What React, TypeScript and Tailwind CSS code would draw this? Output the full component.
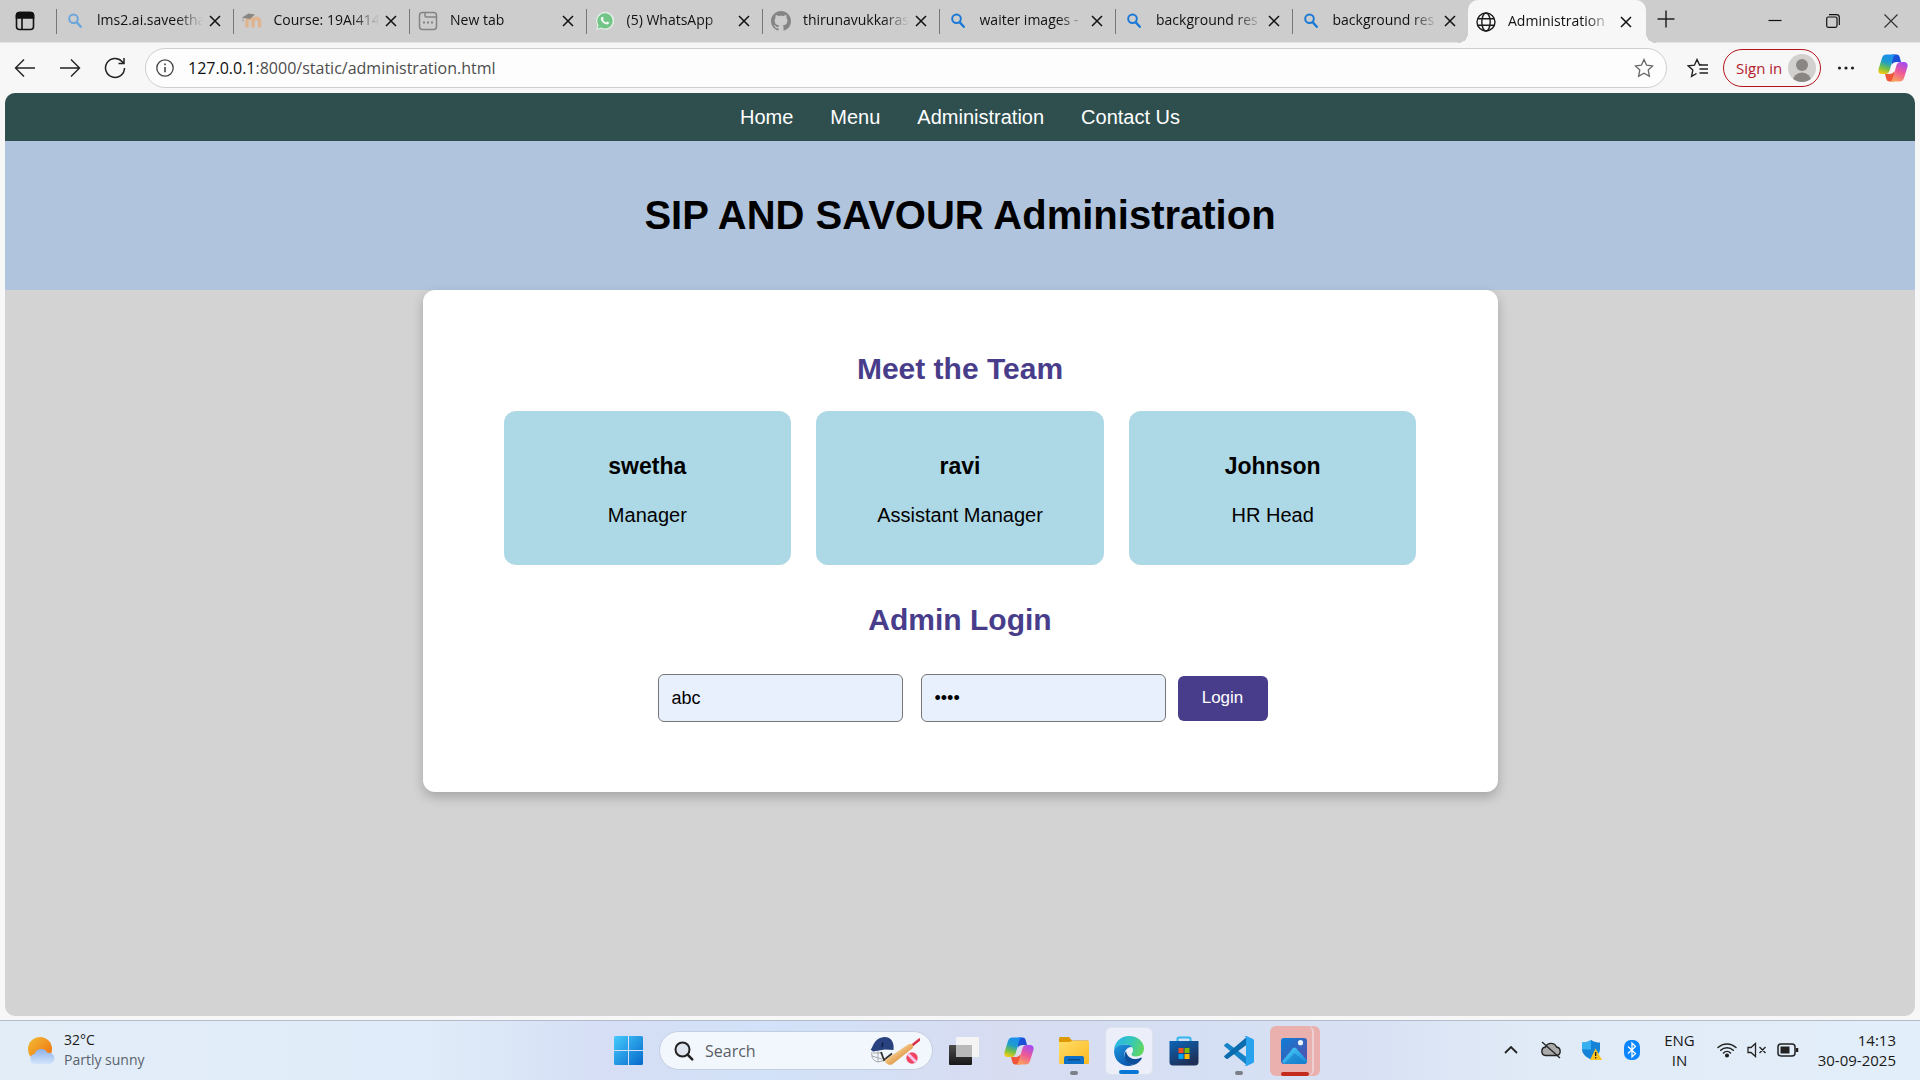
import React from "react";

const ui = "font-['Open_Sans','Noto_Sans',sans-serif]";

function SearchIcon({ color = "#1b7ad6", className = "" }: { color?: string; className?: string }) {
  return (
    <svg viewBox="0 0 18 18" className={"size-[18px] " + className} fill="none" stroke={color} strokeLinecap="round">
      <circle cx="7.5" cy="6.8" r="4.3" strokeWidth="2" />
      <path d="M10.8 10.4l4 4.4" strokeWidth="2.4" />
    </svg>
  );
}

function CloseIcon() {
  return (
    <svg viewBox="0 0 12 12" className="size-3" stroke="#111" strokeWidth="1.5" fill="none">
      <path d="M1 1l10 10M11 1L1 11" />
    </svg>
  );
}

function MoodleIcon() {
  return (
    <svg viewBox="0 0 20 18" className="h-[18px] w-5" fill="none">
      <path d="M5 15.500V9.500a2.600 2.600 0 0 1 6 0v6M11 9.500a2.600 2.600 0 0 1 6.500 0v6" stroke="#e0b48e" strokeWidth="3.400" />
      <path d="M0 5.500L6.500 1.500 13 2.500 8 7l-5-.8z" fill="#8a8681" />
      <path d="M1 5.500v4" stroke="#aaa39c" />
    </svg>
  );
}

function NewTabIcon() {
  return (
    <svg viewBox="0 0 20 20" className="size-5" fill="none" stroke="#848484" strokeWidth="1.5">
      <rect x="1.5" y="1.5" width="17" height="17" rx="3" />
      <path d="M7 1.5v3.2c0 .8.5 1.3 1.3 1.3h10.2" />
      <path d="M5 11.5h2M9 11.5h2M13 11.5h2" strokeWidth="2" />
    </svg>
  );
}

function WhatsAppIcon() {
  return (
    <svg viewBox="0 0 20 20" className="size-5">
      <path d="M1 19l1.400-4.600A9 9 0 1 1 6 17.800z" fill="#e4efe6" />
      <path d="M2.600 17.500l1-3.400A7.600 7.600 0 1 1 6.300 16.600z" fill="#72c487" />
      <path d="M7.200 5.800c.7-.3 1.100.5 1.500 1.700-.2.600-.8.800-.6 1.200.8 1.400 1.700 2 2.900 2.600.5 0 .7-.9 1.200-.9.700.2 1.900.8 1.900 1.100-.1 1.600-1.700 2-2.500 1.900-2.900-.5-5.400-2.900-5.800-5.200-.1-1 .6-2.100 1.400-2.400z" fill="#f1f7f2" />
    </svg>
  );
}

function GithubIcon() {
  return (
    <svg viewBox="0 0 16 16" className="size-5" fill="#858585">
      <path d="M8 0C3.580 0 0 3.580 0 8c0 3.540 2.290 6.530 5.470 7.590.4.070.55-.17.55-.38 0-.19-.010-.82-.010-1.490-2.010.37-2.530-.49-2.690-.94-.09-.23-.48-.94-.82-1.130-.28-.15-.68-.52-.010-.53.63-.010 1.080.58 1.230.82.72 1.210 1.870.87 2.330.66.070-.52.28-.87.51-1.070-1.780-.2-3.640-.89-3.640-3.950 0-.87.31-1.590.82-2.150-.08-.2-.36-1.020.08-2.120 0 0 .67-.21 2.200.82.64-.18 1.320-.27 2-.27s1.360.09 2 .27c1.530-1.040 2.200-.82 2.200-.82.44 1.100.16 1.920.08 2.120.51.56.82 1.270.82 2.150 0 3.070-1.870 3.750-3.650 3.950.29.25.54.73.54 1.480 0 1.070-.010 1.930-.010 2.200 0 .21.15.46.55.38A8.010 8.010 0 0 0 16 8c0-4.420-3.580-8-8-8z" />
    </svg>
  );
}

function GlobeIcon() {
  return (
    <svg viewBox="0 0 20 20" className="size-5" fill="none" stroke="#1b1b1b" strokeWidth="1.400">
      <circle cx="10" cy="10" r="9" />
      <ellipse cx="10" cy="10" rx="4.200" ry="9" />
      <path d="M1.800 6.800h16.400M1.800 13.200h16.400" />
    </svg>
  );
}

function CopilotIcon({ id }: { id: string }) {
  return (
    <svg viewBox="0 0 30 28" className="h-7 w-[30px]">
      <defs>
        <linearGradient id={id + "a"} x1="0.6" y1="0" x2="0.3" y2="1">
          <stop offset="0" stopColor="#1b8df0" />
          <stop offset="0.4" stopColor="#1f9ccb" />
          <stop offset="0.7" stopColor="#6fc04a" />
          <stop offset="1" stopColor="#f2c913" />
        </linearGradient>
        <linearGradient id={id + "b"} x1="0.7" y1="0" x2="0.3" y2="1">
          <stop offset="0" stopColor="#a74bf0" />
          <stop offset="0.5" stopColor="#ee5a96" />
          <stop offset="1" stopColor="#fba25c" />
        </linearGradient>
      </defs>
      <path d="M14 0.500h4.500c2 0 2.800 1.200 3.300 3L23 8h-4c-3 0-4.500 1-5.300 3z" fill="#1b4fd6" />
      <path d="M16 27.500h-4.500c-2 0-2.800-1.200-3.300-3L7 20h4c3 0 4.500-1 5.300-3z" fill="#f0563a" />
      <path d="M8.500 0.500H18c-1.500.5-2.200 1.600-2.700 3.200L11.600 16.500c-.8 2.500-2 3.500-4.600 3.500H4c-3 0-4.200-2-3.400-5L4 4c.8-2.400 2.200-3.500 4.500-3.500z" fill={"url(#" + id + "a)"} />
      <path d="M21.500 27.500H12c1.500-.5 2.200-1.600 2.700-3.200l3.700-12.800c.8-2.500 2-3.500 4.600-3.500h3c3 0 4.200 2 3.400 5L26 24c-.8 2.400-2.200 3.500-4.500 3.500z" fill={"url(#" + id + "b)"} />
    </svg>
  );
}

const tabs: { title: string; icon: React.ReactNode }[] = [
  { title: "lms2.ai.saveetha", icon: <SearchIcon color="#6aa5dc" /> },
  { title: "Course: 19AI414", icon: <MoodleIcon /> },
  { title: "New tab", icon: <NewTabIcon /> },
  { title: "(5) WhatsApp", icon: <WhatsAppIcon /> },
  { title: "thirunavukkaras", icon: <GithubIcon /> },
  { title: "waiter images -", icon: <SearchIcon /> },
  { title: "background res", icon: <SearchIcon /> },
  { title: "background res", icon: <SearchIcon /> },
];

function TabBar() {
  return (
    <div className="flex h-[43px] border-b border-[#e4e4e4] bg-[#cdcdcd] text-sm text-[#111]">
      <button aria-label="Tab actions" className="flex w-14 shrink-0 items-center justify-center pr-1.5">
        <svg viewBox="0 0 20 20" className="size-5" fill="none" stroke="#111" strokeWidth="1.600">
          <rect x="1.500" y="1.500" width="17" height="17" rx="3" />
          <path d="M7 7v11" />
          <path d="M1.500 4.500a3 3 0 0 1 3-3h11a3 3 0 0 1 3 3V7h-17z" fill="#111" />
        </svg>
      </button>
      <div className="flex min-w-0 shrink grow-0 basis-[1412px]">
        {tabs.map((t, i) => (
          <div key={i} className="flex min-w-0 flex-1 items-center">
            <span className="h-[25px] w-px shrink-0 bg-[#777]" />
            <span className="ml-2 flex w-5 shrink-0 justify-center">{t.icon}</span>
            <span className="ml-3 flex-1 overflow-hidden pb-0.5 whitespace-nowrap [mask-image:linear-gradient(to_right,black_75%,transparent)]">{t.title}</span>
            <button aria-label={"Close " + t.title} className="mr-3 ml-1.5 shrink-0"><CloseIcon /></button>
          </div>
        ))}
      </div>
      <div className="relative flex h-[43px] w-[178px] shrink-0 items-center rounded-t-[10px] bg-[#f7f7f7] before:absolute before:bottom-0 before:-left-2.5 before:size-2.5 before:bg-[radial-gradient(circle_at_0_0,#cdcdcd_10px,#f7f7f7_10px)] after:absolute after:-right-2.5 after:bottom-0 after:size-2.5 after:bg-[radial-gradient(circle_at_100%_0,#cdcdcd_10px,#f7f7f7_10px)]">
        <span className="ml-2 shrink-0"><GlobeIcon /></span>
        <span className="ml-3 flex-1 overflow-hidden pb-0.5 whitespace-nowrap [mask-image:linear-gradient(to_right,black_75%,transparent)]">Administration</span>
        <button aria-label="Close tab" className="mr-3.5 ml-2 shrink-0"><CloseIcon /></button>
      </div>
      <button aria-label="New tab" className="flex w-10 shrink-0 items-center justify-center pb-1">
        <svg viewBox="0 0 18 18" className="size-[18px]" stroke="#222" strokeWidth="1.500"><path d="M9 0.500v17M0.500 9h17" /></svg>
      </button>
      <div className="ml-auto flex shrink-0">
        <button aria-label="Minimize" className="flex w-[58px] items-center justify-center">
          <svg viewBox="0 0 14 14" className="size-3.5" stroke="#111" strokeWidth="1.200"><path d="M0.500 6.500h13" /></svg>
        </button>
        <button aria-label="Restore" className="flex w-[58px] items-center justify-center">
          <svg viewBox="0 0 14 14" className="size-3.5" stroke="#111" strokeWidth="1.200" fill="none"><rect x="0.700" y="3" width="10.300" height="10.300" rx="1.500" /><path d="M3 .7h7.500a2.800 2.800 0 0 1 2.800 2.800V11" /></svg>
        </button>
        <button aria-label="Close window" className="flex w-[58px] items-center justify-center">
          <svg viewBox="0 0 14 14" className="size-3.5" stroke="#333" strokeWidth="1.200"><path d="M.5.500l13 13M13.500.500l-13 13" /></svg>
        </button>
      </div>
    </div>
  );
}

const starPath = "M10 1.500l2.600 5.700 6.100.7-4.500 4.200 1.200 6.200L10 15.200l-5.400 3.100 1.200-6.200L1.300 7.900l6.100-.7z";

function Toolbar() {
  return (
    <div className="flex h-[50px] items-center bg-[#f7f7f7]">
      <button aria-label="Back" className="flex w-[45px] justify-center pl-1">
        <svg viewBox="0 0 22 20" className="h-5 w-[22px]" fill="none" stroke="#222" strokeWidth="1.400"><path d="M21 10H1.500M10 1.500L1.500 10l8.500 8.500" /></svg>
      </button>
      <button aria-label="Forward" className="flex w-[45px] justify-center pl-1">
        <svg viewBox="0 0 22 20" className="h-5 w-[22px]" fill="none" stroke="#222" strokeWidth="1.400"><path d="M1 10h19.500M12 1.500l8.500 8.500-8.500 8.500" /></svg>
      </button>
      <button aria-label="Refresh" className="flex w-[45px] justify-center pl-1">
        <svg viewBox="0 0 22 22" className="size-[22px]" fill="none" stroke="#222" strokeWidth="1.500"><path d="M20.500 11A9.500 9.500 0 1 1 18 4.500l1.500 1.700M20 1v5.500h-5.500" /></svg>
      </button>
      <div className="ml-2.5 flex h-10 flex-1 items-center rounded-full border border-[#cfcfcf] bg-[#fdfdfd]">
        <svg viewBox="0 0 18 18" className="ml-2.5 size-[18px] shrink-0" fill="none" stroke="#444" strokeWidth="1.300"><circle cx="9" cy="9" r="8.200" /><path d="M9 8v5.200M9 4.500v1.800" strokeWidth="1.600" /></svg>
        <span className="ml-3.5 flex-1 text-base text-[#4d4d4d]"><span className="text-[#111]">127.0.0.1</span>:8000/static/administration.html</span>
        <button aria-label="Favorite this page" className="mr-3"><svg viewBox="0 0 20 20" className="size-5" fill="none" stroke="#666" strokeWidth="1.300"><path d={starPath} /></svg></button>
      </div>
      <button aria-label="Favorites" className="ml-5">
        <svg viewBox="0 0 22 20" className="h-5 w-[22px]" fill="none" stroke="#222" strokeWidth="1.400"><path d="M14.500 6.500L12.600 7.100 10 1.500 7.400 7.200l-6.100.7 4.500 4.200-1.200 6.200L9.500 15.500M13 7h8M12.500 11h8.500M12.500 15h8.500" /></svg>
      </button>
      <button className="ml-3.5 flex h-[38px] w-[98px] items-center rounded-full border border-[#b3141c] pl-3 text-[15px] text-[#b3202a]">
        <span className="flex-1 text-left whitespace-nowrap">Sign in</span>
        <svg viewBox="0 0 28 28" className="mr-1 size-7 shrink-0"><defs><clipPath id="av"><circle cx="14" cy="14" r="14" /></clipPath></defs><g clipPath="url(#av)"><rect width="28" height="28" fill="#d2d0ce" /><circle cx="14" cy="11" r="6" fill="#8a8683" /><path d="M4.500 28a9.500 9.500 0 0 1 19 0z" fill="#8a8683" /></g></svg>
      </button>
      <button aria-label="Settings and more" className="ml-4"><svg viewBox="0 0 18 6" className="h-1.5 w-[18px]" fill="#222"><circle cx="2.500" cy="3" r="1.600" /><circle cx="9" cy="3" r="1.600" /><circle cx="15.500" cy="3" r="1.600" /></svg></button>
      <button aria-label="Copilot" className="mr-3 ml-[23px]"><CopilotIcon id="top" /></button>
    </div>
  );
}

const team = [
  { name: "swetha", role: "Manager" },
  { name: "ravi", role: "Assistant Manager" },
  { name: "Johnson", role: "HR Head" },
];

function Page() {
  return (
    <div className="mx-[5px] mb-1 flex-1 overflow-hidden rounded-[10px] bg-[#d3d3d3] font-['Liberation_Sans',Arial,sans-serif] text-xl text-black">
      <nav className="flex h-12 items-center justify-center gap-[37px] bg-[#2f4f4f] text-white">
        <a href="#home">Home</a>
        <a href="#menu">Menu</a>
        <a href="#administration">Administration</a>
        <a href="#contact">Contact Us</a>
      </nav>
      <header className="bg-[#b0c4de] py-[50px] text-center">
        <h1 className="text-[40px] leading-[49px] font-bold">SIP AND SAVOUR Administration</h1>
      </header>
      <main className="mx-auto w-[1075px] max-w-full rounded-[12px] bg-white px-[81px] pt-[61px] pb-[70px] shadow-[0_5px_12px_rgba(0,0,0,0.22)]">
        <h2 className="text-center text-[30px] leading-9 font-bold text-[#483d8b]">Meet the Team</h2>
        <div className="mt-6 grid grid-cols-3 gap-[25px]">
          {team.map((m) => (
            <div key={m.name} className="rounded-[12px] bg-[#add8e6] pt-[41px] pb-9 text-center">
              <h3 className="text-[23px] leading-7 font-bold">{m.name}</h3>
              <p className="mt-[21px] leading-7">{m.role}</p>
            </div>
          ))}
        </div>
        <h2 className="mt-[37px] text-center text-[30px] leading-9 font-bold text-[#483d8b]">Admin Login</h2>
        <form className="mt-9 flex items-center justify-center pl-[5px]" onSubmit={(e) => e.preventDefault()}>
          <input type="text" aria-label="Username" defaultValue="abc" className="h-12 w-[245px] rounded-md border border-[#767676] bg-[#e8f0fe] px-[13px] text-lg" />
          <input type="password" aria-label="Password" defaultValue="abcd" className="ml-[18px] h-12 w-[245px] rounded-md border border-[#767676] bg-[#e8f0fe] px-[13px] text-lg" />
          <button type="submit" className="ml-3 h-[45px] w-[90px] rounded-md bg-[#483d8b] text-[17px] text-white">Login</button>
        </form>
      </main>
    </div>
  );
}

function Taskbar() {
  const cell = "relative flex h-12 w-12 shrink-0 items-center justify-center rounded-md";
  return (
    <footer className="relative flex h-[60px] shrink-0 items-center justify-between border-t border-[#b3bcc9] bg-[linear-gradient(90deg,#e2edf8_0%,#e0ecf9_22%,#d5def5_32%,#d2e2f8_40%,#d7dcf1_52%,#d5dff3_63%,#d9e2f4_72%,#e1ebf7_80%,#e2eef9_100%)] text-sm text-[#1a1a1a]">
      <button className="flex items-center pb-0.5 pl-[26px] text-left">
        <svg viewBox="0 0 30 30" className="size-[30px]">
          <defs>
            <linearGradient id="sun" x1="0" y1="0" x2="1" y2="1"><stop offset="0" stopColor="#f3bd35" /><stop offset="1" stopColor="#ef6a0c" /></linearGradient>
            <linearGradient id="cloud" x1="0" y1="0" x2="0" y2="1"><stop offset="0" stopColor="#8eb1ea" /><stop offset="1" stopColor="#d3e5fb" /></linearGradient>
          </defs>
          <circle cx="14" cy="14" r="12" fill="url(#sun)" />
          <path d="M9 29a5 5 0 0 1-.5-9.900A7 7 0 0 1 21.500 18 5.600 5.600 0 1 1 23.500 29z" fill="url(#cloud)" />
        </svg>
        <span className="ml-2 leading-5"><span className="block">32°C</span><span className="block text-[#5b626b]">Partly sunny</span></span>
      </button>
      <div className="absolute inset-y-0 left-1/2 flex -translate-x-1/2 items-center gap-[7px] pl-1">
        <button aria-label="Start" className={cell}>
          <svg viewBox="0 0 29 29" className="size-[29px]">
            <defs><linearGradient id="win" x1="0" y1="0" x2="1" y2="1"><stop offset="0" stopColor="#45cafd" /><stop offset="1" stopColor="#0568cb" /></linearGradient></defs>
            <path d="M0 1.500A1.500 1.500 0 0 1 1.500 0H14v14H0zM15 0h12.500A1.500 1.500 0 0 1 29 1.500V14H15zM0 15h14v14H1.500A1.500 1.500 0 0 1 0 27.500zM15 15h14v12.500a1.500 1.500 0 0 1-1.500 1.500H15z" fill="url(#win)" />
          </svg>
        </button>
        <label className="flex h-[39px] w-[274px] items-center rounded-full border border-[#c3cde0] bg-[#f2f6fd]">
          <svg viewBox="0 0 20 20" className="ml-3.5 size-5 shrink-0" fill="none" stroke="#222" strokeLinecap="round"><circle cx="8.500" cy="8.500" r="7" strokeWidth="2" fill="#dfe5ee" /><path d="M13.800 13.800l4.400 4.500" strokeWidth="2.600" /></svg>
          <input type="text" aria-label="Search" placeholder="Search" className="ml-[11px] min-w-0 flex-1 text-base placeholder-[#5a5f66]" />
          <svg viewBox="0 0 50 30" className="mr-3 h-[30px] w-[50px] shrink-0" fill="none">
            <defs><linearGradient id="bat" x1="0" y1="0" x2="1" y2="1"><stop offset="0.300" stopColor="#f9d596" /><stop offset="0.700" stopColor="#dd9140" /></linearGradient></defs>
            <path d="M2 16c-1 5 1 9 6 10l8-2M2 20l10 3M8 15v11M3 17h10" stroke="#a5a9ae" strokeWidth="1" />
            <path d="M11 16l3 8 8-6.500" stroke="#333" strokeWidth="1.800" />
            <path d="M.5 13.500C3 12 3.500 2.500 13 1.200c8-1 11.500 5 10.500 12.800l-8.500-.5-12 2z" fill="#28427f" />
            <path d="M13 6.500l-1.200 4.500" stroke="#111e45" strokeWidth="1.500" />
            <path d="M42 9.500l7.500-6" stroke="#d8314b" strokeWidth="2.400" strokeLinecap="round" />
            <path d="M38.500 8.200q2-1 4 .3 1.500 2 0 3.800L22 28.500c-3 1.200-8-1.500-7-4.500z" fill="url(#bat)" />
            <circle cx="42" cy="22" r="5.700" fill="#ef4761" /><path d="M38 18l8 8" stroke="#f7c5ee" strokeWidth="3" />
          </svg>
        </label>
        <button aria-label="Task view" className={cell}>
          <svg viewBox="0 0 30 28" className="h-7 w-[30px]">
            <defs><linearGradient id="tv" x1="0" y1="0" x2="0" y2="1"><stop offset="0" stopColor="#4c4c4c" /><stop offset="1" stopColor="#181818" /></linearGradient></defs>
            <rect x="0" y="8" width="23" height="20" rx="1" fill="url(#tv)" /><rect x="7" y="0" width="23" height="20" rx="1" fill="#f4f4f4" /><rect x="7" y="8" width="16" height="12" fill="#b9b9b9" />
          </svg>
        </button>
        <button aria-label="Copilot" className={cell}><CopilotIcon id="tb" /></button>
        <button aria-label="File Explorer" className={cell}>
          <svg viewBox="0 0 30 27" className="h-[27px] w-[30px]">
            <defs><linearGradient id="fold" x1="0" y1="0" x2="1" y2="1"><stop offset="0" stopColor="#ffdd66" /><stop offset="1" stopColor="#fbb922" /></linearGradient></defs>
            <path d="M0 1.500A1.500 1.500 0 0 1 1.500 0H10l3 3.500h15.500A1.500 1.500 0 0 1 30 5v6H0z" fill="#dd9a06" /><path d="M0 5h11l2-1h17v21.500a1.500 1.500 0 0 1-1.500 1.500h-27A1.500 1.500 0 0 1 0 25.500z" fill="url(#fold)" /><path d="M5 27v-6a2 2 0 0 1 2-2h16a2 2 0 0 1 2 2v6z" fill="#0d6fc6" /><path d="M9 22.700h12" stroke="#0a4a87" strokeWidth="1.400" />
          </svg>
          <span className="absolute bottom-0 h-1 w-2 rounded-full bg-[#7a7f88]" />
        </button>
        <button aria-label="Edge" className={cell + " border border-[#dde2ee] bg-[#eceff9]"}>
          <svg viewBox="0 0 30 30" className="size-[30px]">
            <defs>
              <linearGradient id="e1" x1="0" y1="0.300" x2="1" y2="0.600"><stop offset="0" stopColor="#2bb4e8" /><stop offset="0.500" stopColor="#34c6bd" /><stop offset="1" stopColor="#62d85a" /></linearGradient>
              <linearGradient id="e2" x1="0" y1="0" x2="0.600" y2="1"><stop offset="0" stopColor="#1f98e0" /><stop offset="1" stopColor="#0b58ad" /></linearGradient>
            </defs>
            <path d="M0 14C.5 6 7 0 15 0c9 0 15 6 15 12.500 0 5-3.500 8-8 8-3.500 0-5-1.500-4.500-2.500 1.200-1.400 1.500-2.500 1.500-4 0-3-3-5.500-7.500-5.500C6 8.500 1.500 11 0 14z" fill="url(#e1)" />
            <path d="M0 15c1-4.500 6-6.500 11.500-6.500 3 0 5.500 1 6.700 2.500-4-.5-7.700 3-7.700 7.500 0 5.500 4.500 9.500 9 10.500C10 32.500 0 26 0 15z" fill="url(#e2)" />
            <path d="M19.500 29c4-1 6.500-3.500 8-6 .7-1.200 0-1.700-.8-1.300C20 25 13 22 12 15c-3.500 6 0 13 7.500 14z" fill="#0e4f9c" />
          </svg>
          <span className="absolute bottom-0 h-1 w-5 rounded-full bg-[#0878d6]" />
        </button>
        <button aria-label="Microsoft Store" className={cell}>
          <svg viewBox="0 0 30 30" className="size-[30px]">
            <defs><linearGradient id="st" x1="0" y1="0" x2="0.500" y2="1"><stop offset="0" stopColor="#0b65b8" /><stop offset="1" stopColor="#1e2f58" /></linearGradient></defs>
            <path d="M8.500 7V3A1.500 1.500 0 0 1 10 1.500h10A1.500 1.500 0 0 1 21.500 3v4" fill="none" stroke="#31b6ee" strokeWidth="2" /><path d="M.5 5h29v21a3.500 3.500 0 0 1-3.500 3.500H4A3.500 3.500 0 0 1 .5 26z" fill="url(#st)" /><path d="M9.500 12h5v5h-5z" fill="#f25022" /><path d="M15.500 12h5v5h-5z" fill="#7fba00" /><path d="M9.500 18h5v5h-5z" fill="#00a4ef" /><path d="M15.500 18h5v5h-5z" fill="#ffb900" />
          </svg>
          </button>
        <button aria-label="Visual Studio Code" className={cell}>
          <svg viewBox="0 0 30 30" className="size-[30px]">
            <path d="M0.500 10.200q-.8-.8 0-1.500L2.300 7.200q.8-.6 1.600 0L23 21.500v7.800z" fill="#1583c7" />
            <path d="M0.500 19.800q-.8.800 0 1.500l1.800 1.500q.8.600 1.600 0L23 8.500V.7z" fill="#0a6bae" />
            <path d="M22.500 0L29 3q1 .5 1 1.500v21q0 1-1 1.500l-6.500 3q-1.500 0-2-1 1.500.5 1.500-1V2q0-1.500-1.500-1 .5-1 2-1z" fill="#29a3ee" />
          </svg>
          <span className="absolute bottom-0 h-1 w-2 rounded-full bg-[#7a7f88]" />
        </button>
        <button aria-label="Photos" className="relative flex h-[50px] w-[50px] shrink-0 rounded-md bg-[#e9b0ae]">
          <span className="relative flex w-[44px] items-center justify-center rounded-r-md border-r-2 border-[#eed0d2] pl-1.5">
            <svg viewBox="0 0 26 26" className="size-[26px]">
              <defs><linearGradient id="ph" x1="0" y1="0" x2="1" y2="1"><stop offset="0" stopColor="#0b7fd5" /><stop offset="1" stopColor="#5b4bab" /></linearGradient><linearGradient id="mt" x1="0" y1="0" x2="1" y2="1"><stop offset="0" stopColor="#4cd3fb" /><stop offset="1" stopColor="#1784d5" /></linearGradient></defs>
              <rect width="26" height="26" rx="3" fill="url(#ph)" /><path d="M1 23.500L12 10.200q1.500-1.500 3 0L26 22v1a3 3 0 0 1-3 3H3z" fill="url(#mt)" /><path d="M3 26l10.500-11L25 25q-1 1-2 1z" fill="#1272c4" opacity=".5" /><circle cx="19.500" cy="4.700" r="2.600" fill="#e9f1fc" />
            </svg>
            <span className="absolute bottom-0 left-[11px] h-1 w-7 rounded-full bg-[#c42b1c]" />
          </span>
        </button>
      </div>
      <div className="flex items-center pr-6 pb-0.5 text-[15px]">
        <button aria-label="Show hidden icons"><svg viewBox="0 0 14 8" className="h-2 w-3.5" fill="none" stroke="#222" strokeWidth="1.800"><path d="M1 7l6-6 6 6" /></svg></button>
        <svg viewBox="0 0 22 18" className="ml-[22px] h-[18px] w-[22px]" fill="#aaa" stroke="#222" strokeWidth="1.400"><path d="M5.500 14.500a4.300 4.300 0 0 1 0-8.500 6 6 0 0 1 11 0 4.300 4.300 0 0 1 0 8.500z" /><path d="M2 1l18 16" /></svg>
        <svg viewBox="0 0 20 20" className="ml-5 size-5"><path d="M9 0c3 2 6 2.500 9 2.500V9c0 5-4 8-9 10.500C4 17 0 14 0 9V2.500C3 2.500 6 2 9 0z" fill="#1482d6" /><path d="M9 0v9.500H0v-7C3 2.500 6 2 9 0z" fill="#38aff0" /><path d="M13.500 8.500L20 20H8z" fill="#ffc31f" /><path d="M13.700 12v4M13.700 17v1.500" stroke="#222" strokeWidth="1.300" /></svg>
        <svg viewBox="0 0 16 20" className="ml-[22px] h-5 w-4"><rect width="16" height="20" rx="7" fill="#0a84ff" /><path d="M4 6.500l7.500 7L8 17V3l3.500 3.500L4 13.500" fill="none" stroke="#fff" strokeWidth="1.300" /></svg>
        <button className="ml-6 text-center leading-5">ENG<br />IN</button>
        <button aria-label="Network, sound, battery" className="ml-[22px] flex items-center">
          <svg viewBox="0 0 20 16" className="h-4 w-5" fill="none" stroke="#222" strokeWidth="1.500" strokeLinecap="round"><path d="M1 5.500a13 13 0 0 1 18 0M3.700 8.300a9 9 0 0 1 12.600 0M6.500 11a5 5 0 0 1 7 0" /><circle cx="10" cy="13.500" r="1.300" fill="#222" /></svg>
          <svg viewBox="0 0 20 16" className="ml-2.5 h-4 w-5" fill="none" stroke="#222" strokeWidth="1.300"><path d="M1 5.500h3L8.500 1.500v13L4 10.500H1zM12.500 5l6 6M18.500 5l-6 6" /></svg>
          <svg viewBox="0 0 22 14" className="ml-2.5 h-3.5 w-[22px]" fill="none" stroke="#222" strokeWidth="1.500"><rect x="1" y="1" width="17" height="12" rx="3" /><rect x="3.500" y="3.500" width="9" height="7" fill="#222" stroke="none" /><path d="M20 5v4" strokeWidth="2.500" /></svg>
        </button>
        <button className="ml-[19px] text-right leading-5">14:13<br />30-09-2025</button>
      </div>
    </footer>
  );
}

export default function App() {
  return (
    <div className={"flex min-h-screen flex-col bg-[#f7f7f7] " + ui}>
      <TabBar />
      <Toolbar />
      <Page />
      <Taskbar />
    </div>
  );
}
